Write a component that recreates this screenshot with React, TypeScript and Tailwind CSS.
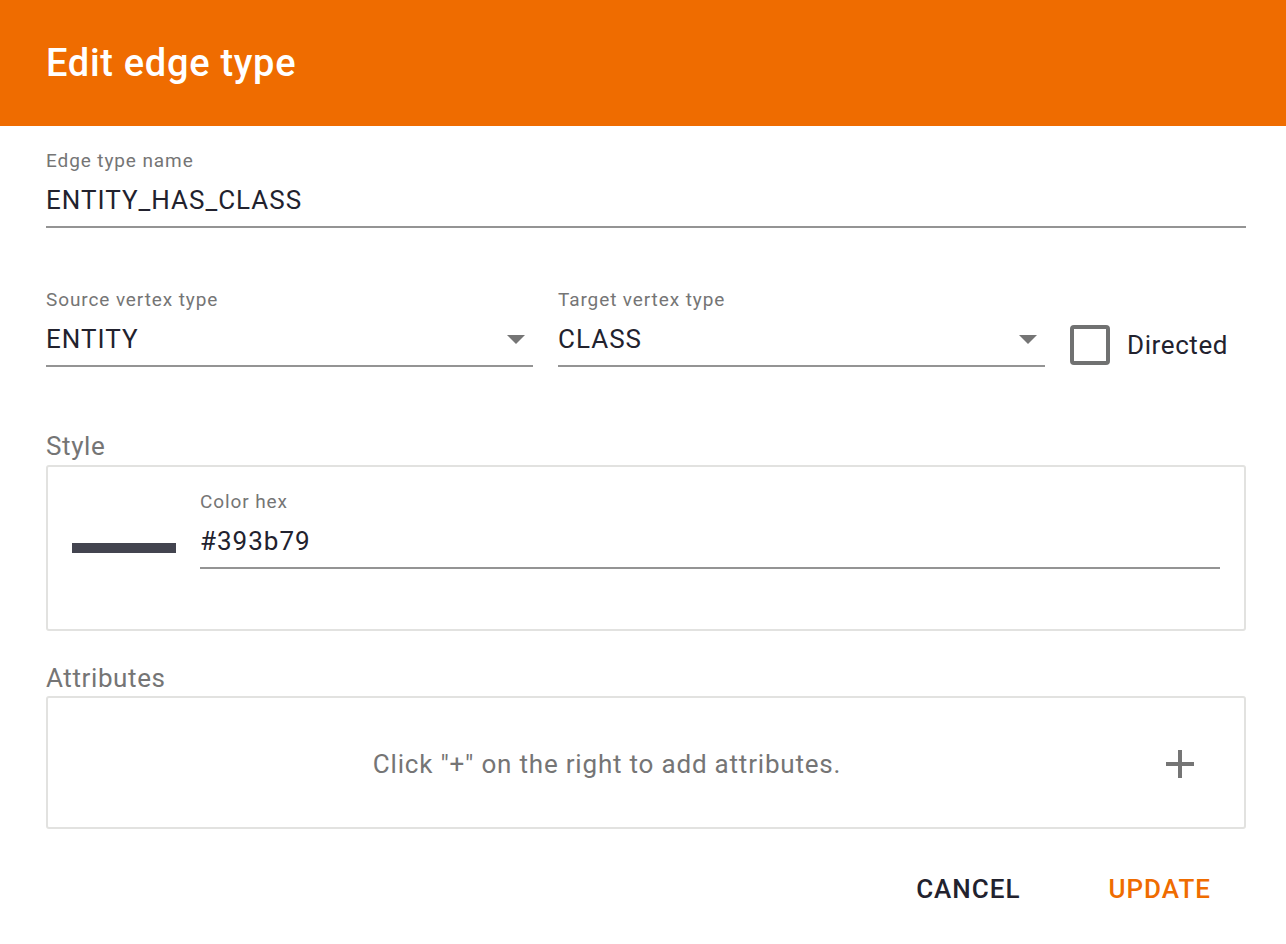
import React from 'react';

const font = { fontFamily: 'Roboto, "Noto Sans", sans-serif' };

const Field = ({ label, value, dropdown }: { label: string; value: string; dropdown?: boolean }) => (
  <div className="flex-1 min-w-0">
    <div className="text-[19px] leading-[21px] tracking-[0.9px] text-[#757575]">{label}</div>
    <div className="mt-[14px] pb-[11px] border-b-2 border-[#949494] flex items-center">
      <span className="flex-1 text-[26px] leading-[30px] tracking-[1px] text-[#22222e]">{value}</span>
      {dropdown && (
        <svg width="18" height="9" viewBox="0 0 18 9" className="mr-[8px]">
          <path d="M0 0h18L9 9z" fill="#757575" />
        </svg>
      )}
    </div>
  </div>
);

export default function App() {
  return (
    <div className="w-[1286px] h-[944px] bg-white" style={font}>
      {/* Header */}
      <div className="h-[126px] bg-[#ef6c00] flex items-center pl-[46px]">
        <h1 className="text-[38px] font-medium text-white tracking-[0.7px]">Edit edge type</h1>
      </div>

      <div className="pl-[46px] pr-[40px] pt-[24px]">
        <Field label="Edge type name" value="ENTITY_HAS_CLASS" />

        <div className="mt-[61px] flex items-start gap-[25px]">
          <Field label="Source vertex type" value="ENTITY" dropdown />
          <Field label="Target vertex type" value="CLASS" dropdown />
          <div className="w-[176px] shrink-0 flex items-center pt-[36px]">
            <div className="w-[40px] h-[40px] border-4 border-[#707171] rounded-[4px]" />
            <span className="ml-[17px] text-[26px] leading-[30px] tracking-[0.6px] text-[#22222e]">Directed</span>
          </div>
        </div>

        {/* Style */}
        <div className="mt-[64px] text-[26px] leading-[30px] tracking-[0.6px] text-[#757575]">Style</div>
        <div className="mt-[4px] h-[166px] border-2 border-[#e2e2e0] rounded-[3px] flex items-start pl-[24px] pr-[24px] pt-[24px]">
          <div className="w-[104px] h-[10px] bg-[#43444f] mt-[52px] shrink-0" />
          <div className="ml-[24px] flex-1">
            <Field label="Color hex" value="#393b79" />
          </div>
        </div>

        {/* Attributes */}
        <div className="mt-[32px] text-[26px] leading-[30px] tracking-[0.6px] text-[#757575]">Attributes</div>
        <div className="mt-[3px] h-[133px] border-2 border-[#e2e2e0] rounded-[3px] flex items-center pr-[50px]">
          <div className="flex-1 text-center text-[26px] leading-[30px] tracking-[0.8px] text-[#757575] pt-[3px]">
            Click "+" on the right to add attributes.
          </div>
          <svg width="28" height="28" viewBox="0 0 28 28" className="mt-[3px]">
            <path d="M12 0h4v28h-4z M0 12h28v4H0z" fill="#757575" />
          </svg>
        </div>

        {/* Actions */}
        <div className="mt-[45px] flex justify-end gap-[88px] pr-[35px]">
          <button className="text-[26px] font-medium leading-[30px] tracking-[1px] text-[#22222e]">CANCEL</button>
          <button className="text-[26px] font-medium leading-[30px] tracking-[1px] text-[#ef6c00]">UPDATE</button>
        </div>
      </div>
    </div>
  );
}
